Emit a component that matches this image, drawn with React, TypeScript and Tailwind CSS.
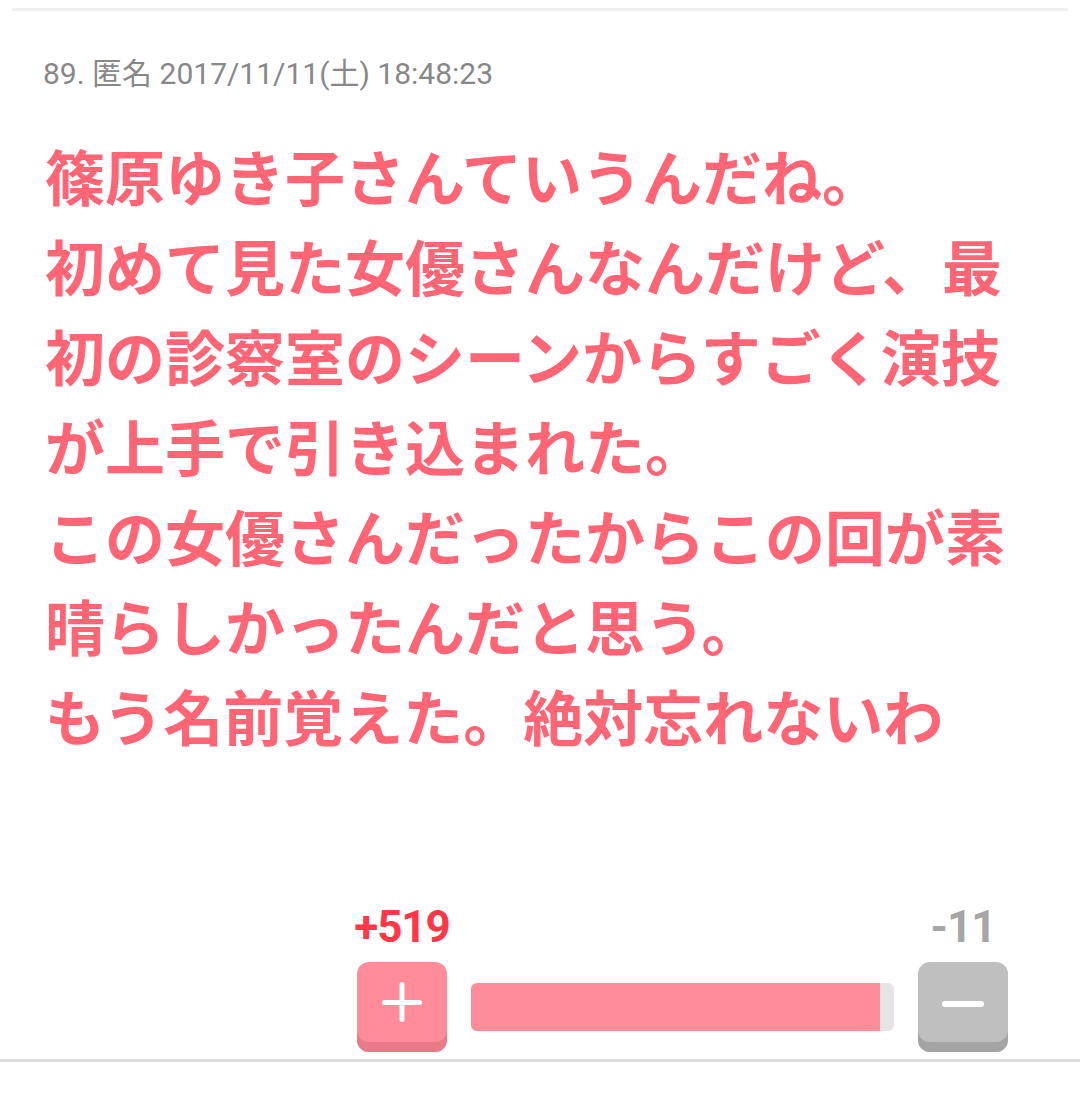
import React from 'react';

const comment = {
  no: 89,
  name: '匿名',
  date: '2017/11/11(土) 18:48:23',
  body:
    '篠原ゆき子さんていうんだね。\n初めて見た女優さんなんだけど、最初の診察室のシーンからすごく演技が上手で引き込まれた。\nこの女優さんだったからこの回が素晴らしかったんだと思う。\nもう名前覚えた。絶対忘れないわ',
  plus: 519,
  minus: 11,
};

const PlusIcon = () => (
  <svg width="40" height="40" viewBox="0 0 40 40">
    <path d="M2.5 20.5H37.5M20 2.5V37.5" stroke="#fff" strokeWidth="5" strokeLinecap="round" fill="none" />
  </svg>
);

const MinusIcon = () => (
  <svg width="42" height="40" viewBox="0 0 42 40">
    <path d="M3 22H39" stroke="#fff" strokeWidth="6" strokeLinecap="round" fill="none" />
  </svg>
);

export default function App() {
  return (
    <div className="w-[1080px] h-[1093px] bg-white overflow-hidden font-['Roboto','Noto_Sans_CJK_JP',sans-serif]">
      <div className="mx-[12px] mt-[8px] h-[3px] bg-[#efefef]" />

      <div className="mt-[45px] pl-[43px] text-[30px] leading-[36px] text-[#888888]">
        {comment.no}. {comment.name} {comment.date}
      </div>

      <div className="mt-[38px] px-[45px] whitespace-pre-line font-['Noto_Sans_CJK_JP',sans-serif] font-bold text-[60px] leading-[90px] text-[#ff6575]">
        {comment.body}
      </div>

      <div className="mt-[145px] ml-auto mr-[72px] w-[651px] flex">
        <div className="w-[90px] flex flex-col items-center">
          <div className="text-[44px] leading-[44px] font-bold tracking-[-1px] text-[#ff3749] mb-[13px]">+{comment.plus}</div>
          <div className="w-[90px] h-[90px] rounded-[12px] bg-[#ff8c98] shadow-[inset_0_-10px_0_#e97a87] flex items-start justify-center pt-[20px]">
            <PlusIcon />
          </div>
        </div>

        <div className="flex-1 self-end mx-6 mb-[21px] h-[48px] rounded-[6px] bg-[#e5e5e5] overflow-hidden">
          <div className="h-full w-[96.7%] bg-[#ff8c98]" />
        </div>

        <div className="w-[90px] flex flex-col items-center">
          <div className="text-[44px] leading-[44px] font-bold tracking-[-1px] text-[#a6a6a6] mb-[13px]">-{comment.minus}</div>
          <div className="w-[90px] h-[90px] rounded-[12px] bg-[#bfbfbf] shadow-[inset_0_-10px_0_#a4a4a4] flex items-start justify-center pt-[20px]">
            <MinusIcon />
          </div>
        </div>
      </div>

      <div className="mt-[7px] h-[3px] bg-[#dcdcdf]" />
    </div>
  );
}
